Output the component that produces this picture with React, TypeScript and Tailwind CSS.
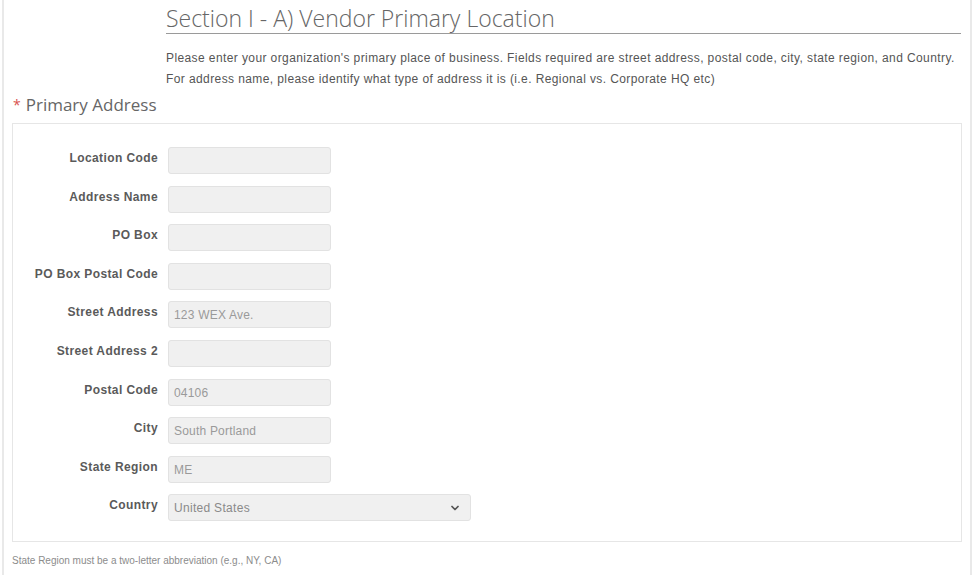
import { ChevronDown } from "lucide-react";

const fields = [
    { label: "Location Code", value: "" },
    { label: "Address Name", value: "" },
    { label: "PO Box", value: "" },
    { label: "PO Box Postal Code", value: "" },
    { label: "Street Address", value: "123 WEX Ave." },
    { label: "Street Address 2", value: "" },
    { label: "Postal Code", value: "04106" },
    { label: "City", value: "South Portland" },
    { label: "State Region", value: "ME" },
];

function FieldRow({ label, children }: { label: string; children: React.ReactNode }) {
    return (
        <div className="flex items-start">
            <div className="w-[146px] shrink-0 pt-[3px] pr-[1px] text-right text-[12px] font-bold leading-[16px] tracking-[0.4px] text-[#5a5a5a]">
                {label}
            </div>
            <div className="ml-[9px]">{children}</div>
        </div>
    );
}

export default function App() {
    return (
        <div className="min-h-[575px] bg-white font-['Liberation_Sans',Arial,sans-serif]">
            <div className="ml-[2px] w-[970px] min-h-[575px] border-x-2 border-[#e9e9e9] pt-[4px]">
                <div className="ml-[162px] mr-[9px]">
                    <h1 className="font-['Open_Sans',sans-serif] text-[23px] font-light leading-[28px] text-[#666] pb-[1px] border-b border-[#9a9a9a]">
                        Section I - A) Vendor Primary Location
                    </h1>
                    <div className="mt-[14px] text-[12px] leading-[21px] tracking-[0.4px] text-[#555]">
                        <p>
                            Please enter your organization's primary place of business. Fields required are street address, postal code, city, state region, and Country.
                        </p>
                        <p>For address name, please identify what type of address it is (i.e. Regional vs. Corporate HQ etc)</p>
                    </div>
                </div>

                <div className="ml-[9px] mt-[3px] font-['Open_Sans',sans-serif] text-[17px] leading-[24px] text-[#666]">
                    <span className="text-[#d9534f] text-[14px] mr-[5px] align-top">*</span>
                    Primary Address
                </div>

                <div className="ml-[8px] mr-[8px] mt-[6px] border border-[#e6e6e6] pt-[23px] pb-[20px]">
                    <div className="flex flex-col gap-[11.6px]">
                        {fields.map((f) => (
                            <FieldRow key={f.label} label={f.label}>
                                <div className="flex h-[27px] w-[163px] items-center rounded-[3px] border border-[#e2e2e2] bg-[#f0f0f0] px-[5px] pt-[1px] text-[12px] tracking-[0.2px] text-[#9a9a9a]">
                                    {f.value}
                                </div>
                            </FieldRow>
                        ))}
                        <FieldRow label="Country">
                            <div className="flex h-[27px] w-[303px] items-center justify-between rounded-[3px] border border-[#e2e2e2] bg-[#f0f0f0] pl-[5px] pr-[9px] pt-[1px] text-[12px] tracking-[0.3px] text-[#8a8a8a]">
                                <span>United States</span>
                                <ChevronDown size={12} strokeWidth={3.5} className="text-[#555]" />
                            </div>
                        </FieldRow>
                    </div>
                </div>

                <p className="ml-[8px] mt-[11px] text-[10px] text-[#8c8c8c]">
                    State Region must be a two-letter abbreviation (e.g., NY, CA)
                </p>
            </div>
        </div>
    );
}
